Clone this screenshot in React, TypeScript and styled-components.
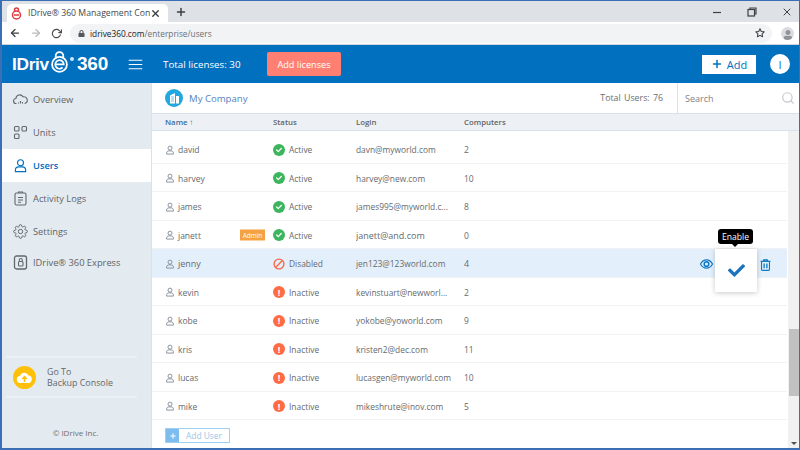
import React from "react";
import styled, { createGlobalStyle } from "styled-components";
import {
  FiArrowLeft,
  FiArrowRight,
  FiRotateCw,
  FiStar,
  FiPlus,
  FiX,
  FiMenu,
  FiSearch,
} from "react-icons/fi";
import { FaLock, FaCheck, FaUser } from "react-icons/fa";

const Global = createGlobalStyle`
  html, body { margin: 0; padding: 0; width: 800px; height: 450px; overflow: hidden; }
  * { box-sizing: border-box; }
  body { font-family: "Open Sans", "Liberation Sans", sans-serif; }
`;

const Frame = styled.div`
  width: 800px;
  height: 450px;
  border: 1px solid #3a6fb5;
  border-left-width: 2px;
  border-bottom-width: 2px;
  display: flex;
  flex-direction: column;
  overflow: hidden;
  background: #fff;
`;

const TabStrip = styled.div`
  height: 21px;
  background: #dee1e6;
  display: flex;
  align-items: flex-end;
  padding-left: 5px;
  flex-shrink: 0;
`;

const Tab = styled.div`
  width: 161px;
  height: 18px;
  background: #fff;
  border-radius: 5px 5px 0 0;
  display: flex;
  align-items: center;
  padding: 0 7px 0 4px;
  font-size: 8.7px;
  color: #45494d;
  white-space: nowrap;
`;

const TabTitle = styled.span`
  flex: 1;
  margin-left: 6px;
  overflow: hidden;
`;

const NewTab = styled.div`
  margin: 0 0 2px 7px;
  color: #3c4043;
  display: flex;
  height: 16px;
  align-items: center;
`;

const WindowButtons = styled.div`
  margin-left: auto;
  height: 21px;
  display: flex;
  align-items: center;
  gap: 24.5px;
  padding-right: 6px;
  color: #3c4043;
`;

const ToolBar = styled.div`
  height: 23px;
  background: #fff;
  display: flex;
  align-items: center;
  padding-left: 7px;
  gap: 9px;
  color: #5f6368;
  border-bottom: 1px solid #d0d4da;
  flex-shrink: 0;
`;

const UrlBar = styled.div`
  width: 702px;
  height: 19px;
  margin-left: -1px;
  border-radius: 10px;
  background: #f1f3f4;
  display: flex;
  align-items: center;
  padding: 0 7px 0 8px;
  font-size: 8.3px;
  color: #6d7074;
`;

const UrlHost = styled.span`
  color: #202124;
  margin-left: 5px;
`;

const UrlEnd = styled.div`
  margin-left: auto;
  display: flex;
  color: #3c4043;
`;

const Avatar = styled.div`
  width: 13px;
  height: 13px;
  border-radius: 50%;
  background: #dadce0;
  color: #8f9296;
  display: flex;
  align-items: flex-end;
  justify-content: center;
  overflow: hidden;
`;

const Header = styled.header`
  height: 38px;
  background: #0070bf;
  display: flex;
  align-items: center;
  color: #fff;
  flex-shrink: 0;
`;

const Logo = styled.div`
  width: 125px;
  padding-left: 10px;
  display: flex;
  align-items: center;
  font-family: "Liberation Sans", sans-serif;
  font-weight: 700;
  font-size: 19px;
  letter-spacing: -0.2px;
`;

const LogoWord = styled.span`
  font-size: 17.3px;
  letter-spacing: -0.3px;
`;

const LogoMark = styled.svg`
  margin: -4px 0 0 1px;
`;

const Reg = styled.span`
  width: 4px;
  height: 4px;
  border-radius: 50%;
  background: #cfe4f4;
  margin: -10px 3px 0 1px;
`;

const Licenses = styled.div`
  font-size: 9.8px;
  margin-left: 19px;
  width: 104px;
`;

const AddLicenses = styled.div`
  width: 74px;
  height: 24px;
  background: #ff7f73;
  border-radius: 2px;
  font-size: 9.2px;
  display: flex;
  align-items: center;
  justify-content: center;
`;

const AddButton = styled.div`
  margin-left: auto;
  width: 54px;
  height: 19px;
  background: #fff;
  color: #0070bf;
  font-size: 11px;
  display: flex;
  align-items: center;
  justify-content: center;
  gap: 4px;
`;

const UserBubble = styled.div`
  width: 20px;
  height: 20px;
  border-radius: 50%;
  background: #fff;
  color: #0070bf;
  font-size: 11px;
  margin: 0 9px 0 14px;
  display: flex;
  align-items: center;
  justify-content: center;
`;

const Body = styled.div`
  flex: 1;
  display: flex;
  min-height: 0;
`;

const Sidebar = styled.nav`
  width: 150px;
  background: #e4ebf0;
  border-right: 1px solid #d8e2ea;
  display: flex;
  flex-direction: column;
  flex-shrink: 0;
`;

const NavList = styled.div`
  display: flex;
  flex-direction: column;
`;

const NavItem = styled.div<{ $active?: boolean; $short?: boolean }>`
  height: ${(p) => (p.$short ? "29px" : "33px")};
  display: flex;
  align-items: center;
  padding-left: 11px;
  gap: 5px;
  font-size: 9.3px;
  font-weight: ${(p) => (p.$active ? 600 : 400)};
  background: ${(p) => (p.$active ? "#fff" : "transparent")};
  color: ${(p) => (p.$active ? "#0070bf" : "#5f6368")};
  white-space: nowrap;
`;

const BackupBox = styled.div`
  margin: auto 14px 0 4px;
  height: 42px;
  border-top: 2px solid #edf1f4;
  border-bottom: 2px solid #edf1f4;
  display: flex;
  align-items: center;
  padding-left: 7px;
  gap: 11px;
  font-size: 8.9px;
  line-height: 11.5px;
  color: #63676b;
`;

const CloudBadge = styled.div`
  width: 23px;
  height: 23px;
  border-radius: 50%;
  background: #ffc107;
  display: flex;
  align-items: center;
  justify-content: center;
`;

const Copyright = styled.div`
  height: 50px;
  display: flex;
  align-items: flex-end;
  justify-content: center;
  padding: 0 2px 10px 0;
  font-size: 8px;
  color: #6c7074;
`;

const Main = styled.main`
  flex: 1;
  min-width: 0;
  display: flex;
  flex-direction: column;
  position: relative;
`;

const CompanyBar = styled.div`
  height: 30px;
  display: flex;
  align-items: center;
  padding-left: 13px;
  flex-shrink: 0;
`;

const CompanyIcon = styled.div`
  width: 18px;
  height: 18px;
  border-radius: 50%;
  background: #22a7e0;
  display: flex;
  align-items: center;
  justify-content: center;
`;

const CompanyName = styled.div`
  margin-left: 6px;
  font-size: 9.6px;
  color: #5584bd;
`;

const TotalUsers = styled.div`
  margin-left: auto;
  font-size: 8.8px;
  color: #6a6e72;
  word-spacing: 1px;
  padding-right: 14px;
`;

const SearchBox = styled.div`
  width: 122px;
  height: 100%;
  border-left: 1px solid #d8e2ec;
  display: flex;
  align-items: center;
  justify-content: space-between;
  padding: 0 4px 0 7px;
  font-size: 9px;
  color: #7f8387;
`;

const Columns = "grid-template-columns: 108px 83px 108px 1fr;";

const TableHead = styled.div`
  height: 18px;
  background: #edf1f5;
  border-top: 1px solid #d8e2ec;
  border-bottom: 1px solid #d8e2ec;
  display: grid;
  ${Columns}
  align-items: center;
  padding-left: 13px;
  font-size: 7.8px;
  font-weight: 600;
  color: #5f6368;
  flex-shrink: 0;
`;

const SortName = styled.div`
  color: #3e6c9f;
`;

const Rows = styled.div`
  flex: 1;
  padding-top: 4px;
  padding-right: 12px;
`;

const Row = styled.div<{ $selected?: boolean }>`
  height: 28.5px;
  display: grid;
  ${Columns}
  align-items: center;
  padding: 2px 0 0 13px;
  border-bottom: 1px solid #f0f2f4;
  background: ${(p) => (p.$selected ? "#e3f0fb" : "#fff")};
  font-size: ${(p) => (p.$selected ? "9px" : "8.5px")};
  color: #666a6e;
  white-space: nowrap;
`;

const NameCell = styled.div`
  display: flex;
  align-items: center;
  gap: 3px;
  position: relative;
`;

const AdminTag = styled.span`
  position: absolute;
  right: 8px;
  top: 50%;
  transform: translateY(-50%);
  width: 25px;
  height: 11px;
  background: #f5a243;
  color: #fff;
  font-size: 6.5px;
  display: flex;
  align-items: center;
  justify-content: center;
`;

const StatusCell = styled.div`
  display: flex;
  align-items: center;
  gap: 4px;
  font-size: 8.4px;
`;

const StatusDot = styled.span<{ $color: string }>`
  width: 12px;
  height: 12px;
  border-radius: 50%;
  background: ${(p) => p.$color};
  color: #fff;
  display: flex;
  align-items: center;
  justify-content: center;
  font-size: 9px;
  font-weight: 700;
`;

const LoginCell = styled.div<{ $large?: boolean }>`
  width: 96px;
  overflow: hidden;
  text-overflow: ellipsis;
  font-size: ${(p) => (p.$large ? "9px" : "8.4px")};
`;

const RowFoot = styled.div`
  height: 28px;
  padding: 8px 0 0 13px;
`;

const AddUser = styled.div`
  width: 65px;
  height: 15px;
  border: 1px solid #9fd0f2;
  display: flex;
  align-items: center;
  font-size: 8.4px;
  color: #9cc6e6;
`;

const AddUserPlus = styled.span`
  width: 13px;
  height: 100%;
  background: #7dbdee;
  color: #fff;
  display: flex;
  align-items: center;
  justify-content: center;
  margin-right: 7px;
`;

const ScrollTrack = styled.div`
  position: absolute;
  top: 48px;
  right: 0;
  bottom: 0;
  width: 11px;
  background: #f1f1f1;
`;

const ScrollThumb = styled.div`
  position: absolute;
  top: 198px;
  left: 1px;
  right: 0;
  height: 67px;
  background: #c1c1c1;
`;

const ScrollArrow = styled.div`
  position: absolute;
  bottom: 3px;
  left: 3px;
  border: 3px solid transparent;
  border-bottom-width: 0;
  border-top-color: #505050;
`;

const RowIcon = styled.div<{ $left: number }>`
  position: absolute;
  top: 176px;
  left: ${(p) => p.$left}px;
  color: #0e78c2;
  display: flex;
`;

const Popup = styled.div`
  position: absolute;
  left: 563px;
  top: 166px;
  width: 42px;
  height: 43px;
  background: #fff;
  box-shadow: 0 1px 5px rgba(0, 0, 0, 0.22);
  display: flex;
  align-items: center;
  justify-content: center;
  color: #1a73c0;
`;

const Tip = styled.div`
  position: absolute;
  left: 566px;
  top: 146px;
  width: 35px;
  height: 15px;
  background: #000;
  border-radius: 3px;
  color: #fff;
  font-size: 8.6px;
  display: flex;
  align-items: center;
  justify-content: center;

  &::after {
    content: "";
    position: absolute;
    left: 14px;
    bottom: -3px;
    border: 3px solid transparent;
    border-bottom-width: 0;
    border-top-color: #000;
  }
`;

const users = [
  { name: "david", status: "Active", login: "davn@myworld.com", computers: 2 },
  { name: "harvey", status: "Active", login: "harvey@new.com", computers: 10 },
  { name: "james", status: "Active", login: "james995@myworld.com", computers: 8 },
  { name: "janett", status: "Active", login: "janett@and.com", computers: 0, admin: true },
  { name: "jenny", status: "Disabled", login: "jen123@123world.com", computers: 4 },
  { name: "kevin", status: "Inactive", login: "kevinstuart@newworld.com", computers: 2 },
  { name: "kobe", status: "Inactive", login: "yokobe@yoworld.com", computers: 9 },
  { name: "kris", status: "Inactive", login: "kristen2@dec.com", computers: 11 },
  { name: "lucas", status: "Inactive", login: "lucasgen@myworld.com", computers: 10 },
  { name: "mike", status: "Inactive", login: "mikeshrute@inov.com", computers: 5 },
];

const UserGlyph = ({ size = 10, color = "#7b8794", sw = 1.4 }: { size?: number; color?: string; sw?: number }) => (
  <svg width={size} height={size} viewBox="0 0 16 16" fill="none" stroke={color} strokeWidth={sw}>
    <circle cx="8" cy="5" r="3.2" />
    <path d="M2.5 14.5v-1.5c0-2.2 1.8-3.6 3.6-3.6h3.8c1.8 0 3.6 1.4 3.6 3.6v1.5z" />
  </svg>
);

const StatusIcon = ({ status }: { status: string }) => {
  if (status === "Active")
    return (
      <StatusDot $color="#3cb55e">
        <FaCheck size={6} />
      </StatusDot>
    );
  if (status === "Inactive") return <StatusDot $color="#ff6b42">!</StatusDot>;
  return (
    <svg width="12" height="12" viewBox="0 0 12 12" fill="none" stroke="#f8694a" strokeWidth="1.4">
      <circle cx="6" cy="6" r="4.9" />
      <path d="M2.6 9.4 9.4 2.6" />
    </svg>
  );
};

const gray = { fill: "none", stroke: "#62676c", strokeWidth: 1.1 };

const OverviewIcon = () => (
  <svg width="15" height="13" viewBox="0 0 15 13" {...gray}>
    <path d="M3.5 10.5h-.3a2.5 2.5 0 0 1-.3-5A3.8 3.8 0 0 1 10 3.8a3.3 3.3 0 0 1 1.6 6.7" />
    <path d="M5.5 10.5v-1M7.5 10.5V8M9.5 10.5V9" />
  </svg>
);

const UnitsIcon = () => (
  <svg width="15" height="15" viewBox="0 0 15 15" {...gray}>
    <rect x="1.5" y="1.5" width="4.5" height="4.5" rx="1" />
    <rect x="9" y="1.5" width="4.5" height="4.5" rx="1" />
    <rect x="1.5" y="9" width="4.5" height="4.5" rx="1" />
  </svg>
);

const LogsIcon = () => (
  <svg width="15" height="15" viewBox="0 0 15 15" {...gray}>
    <rect x="2" y="2" width="11" height="12" rx="1.5" />
    <path d="M5.5 2V1h4v1M5 6.5h5M5 9h5M5 11.3h3" />
  </svg>
);

const GearIcon = () => (
  <svg width="15" height="15" viewBox="0 0 24 24" fill="none" stroke="#62676c" strokeWidth="1.6">
    <circle cx="12" cy="12" r="3.5" />
    <path d="M19.4 15a1.65 1.65 0 0 0 .33 1.82l.06.06a2 2 0 1 1-2.83 2.83l-.06-.06a1.65 1.65 0 0 0-2.82 1.15V21a2 2 0 1 1-4 0v-.09a1.65 1.65 0 0 0-2.8-1.17l-.06.06a2 2 0 1 1-2.83-2.83l.06-.06a1.65 1.65 0 0 0-1.15-2.82H3a2 2 0 1 1 0-4h.09a1.65 1.65 0 0 0 1.17-2.8l-.06-.06a2 2 0 1 1 2.83-2.83l.06.06a1.65 1.65 0 0 0 2.82-1.15V3a2 2 0 1 1 4 0v.09a1.65 1.65 0 0 0 2.8 1.17l.06-.06a2 2 0 1 1 2.83 2.83l-.06.06a1.65 1.65 0 0 0 1.15 2.82H21a2 2 0 1 1 0 4h-.09a1.65 1.65 0 0 0-1.51 1.09z" />
  </svg>
);

const ExpressIcon = () => (
  <svg width="15" height="15" viewBox="0 0 15 15" {...gray}>
    <rect x="1.5" y="1" width="12" height="13" rx="2" strokeWidth="1.3" />
    <rect x="5.5" y="6.5" width="4.5" height="4.5" rx="1" />
    <path d="M6.3 6.5V5a1.5 1.5 0 0 1 3 0v1.5" />
  </svg>
);

const LogoE = () => (
  <LogoMark width="19" height="24" viewBox="0 0 20 24" fill="none" stroke="#fff">
    <path d="M6 8.5V5.5a4 4 0 0 1 8 0v3" strokeWidth="1.8" />
    <circle cx="10" cy="14.5" r="7.8" strokeWidth="1.9" />
    <path d="M5.5 14.5h9a4.5 4.5 0 1 0-1.2 3.2" strokeWidth="1.8" />
  </LogoMark>
);

export default function App() {
  return (
    <>
      <Global />
      <Frame>
        <TabStrip>
          <Tab>
            <svg width="11" height="13" viewBox="0 0 11 13" fill="none" stroke="#e0393e" strokeWidth="1.5">
              <path d="M3.5 4V3a2 2 0 0 1 4 0v1" />
              <circle cx="5.5" cy="8" r="4" />
              <path d="M3 8h5" />
            </svg>
            <TabTitle>IDrive® 360 Management Conso</TabTitle>
            <FiX size={11} color="#3c4043" strokeWidth={3} />
          </Tab>
          <NewTab>
            <FiPlus size={12} strokeWidth={3} />
          </NewTab>
          <WindowButtons>
            <svg width="10" height="10" viewBox="0 0 10 10" stroke="currentColor" fill="none">
              <path d="M1 5.5h8" strokeWidth="1.2" />
            </svg>
            <svg width="10" height="10" viewBox="0 0 10 10" stroke="currentColor" fill="none" strokeWidth="1.2">
              <rect x="1" y="2.5" width="6.5" height="6.5" />
              <path d="M3 2.5V1h6v6H7.5" />
            </svg>
            <FiX size={12} />
          </WindowButtons>
        </TabStrip>
        <ToolBar>
          <FiArrowLeft size={12} color="#3c4043" strokeWidth={2.5} />
          <FiArrowRight size={12} color="#b8bbbf" strokeWidth={2.5} />
          <FiRotateCw size={11} color="#4a4d50" strokeWidth={2.5} />
          <UrlBar>
            <FaLock size={7} color="#55585c" />
            <UrlHost>idrive360.com</UrlHost>/enterprise/users
            <UrlEnd>
              <FiStar size={10} strokeWidth={2.5} />
            </UrlEnd>
          </UrlBar>
          <Avatar>
            <FaUser size={10} />
          </Avatar>
        </ToolBar>
        <Header>
          <Logo>
            <LogoWord>IDriv</LogoWord>
            <LogoE />
            <Reg />
            360
          </Logo>
          <FiMenu size={17} strokeWidth={1.4} />
          <Licenses>Total licenses: 30</Licenses>
          <AddLicenses>Add licenses</AddLicenses>
          <AddButton>
            <FiPlus size={12} strokeWidth={3} />
            Add
          </AddButton>
          <UserBubble>I</UserBubble>
        </Header>
        <Body>
          <Sidebar>
            <NavList>
              <NavItem>
                <OverviewIcon />
                Overview
              </NavItem>
              <NavItem>
                <UnitsIcon />
                Units
              </NavItem>
              <NavItem $active>
                <UserGlyph size={15} color="#0070bf" sw={1.2} />
                Users
              </NavItem>
              <NavItem>
                <LogsIcon />
                Activity Logs
              </NavItem>
              <NavItem>
                <GearIcon />
                Settings
              </NavItem>
              <NavItem $short>
                <ExpressIcon />
                IDrive® 360 Express
              </NavItem>
            </NavList>
            <BackupBox>
              <CloudBadge>
                <svg width="17" height="13" viewBox="0 0 17 13" fill="none">
                  <path d="M4.5 12a3.5 3.5 0 0 1-.4-7A4.5 4.5 0 0 1 12.5 4.5 3.8 3.8 0 0 1 12.8 12z" fill="#fff" />
                  <path d="M8.5 11V6M6.3 8 8.5 5.7 10.7 8" stroke="#ffc107" strokeWidth="1.5" />
                </svg>
              </CloudBadge>
              <div>
                Go To
                <br />
                Backup Console
              </div>
            </BackupBox>
            <Copyright>© IDrive Inc.</Copyright>
          </Sidebar>
          <Main>
            <CompanyBar>
              <CompanyIcon>
                <svg width="11" height="12" viewBox="0 0 11 12" fill="#fff">
                  <path d="M1 3.5 6 1v10.500H1zM7 4h3v7.500H7z" />
                  <path d="M2 5h3M2 7h3M2 9h3" stroke="#22a7e0" strokeWidth="0.7" />
                </svg>
              </CompanyIcon>
              <CompanyName>My Company</CompanyName>
              <TotalUsers>Total Users: 76</TotalUsers>
              <SearchBox>
                Search
                <FiSearch size={14} color="#c4c8cc" />
              </SearchBox>
            </CompanyBar>
            <TableHead>
              <SortName>Name ↑</SortName>
              <div>Status</div>
              <div>Login</div>
              <div>Computers</div>
            </TableHead>
            <Rows>
              {users.map((u) => (
                <Row key={u.name} $selected={u.name === "jenny"}>
                  <NameCell>
                    <UserGlyph />
                    {u.name}
                    {u.admin && <AdminTag>Admin</AdminTag>}
                  </NameCell>
                  <StatusCell>
                    <StatusIcon status={u.status} />
                    {u.status}
                  </StatusCell>
                  <LoginCell $large={u.name === "janett"}>{u.login}</LoginCell>
                  <div>{u.computers}</div>
                </Row>
              ))}
              <RowFoot>
                <AddUser>
                  <AddUserPlus>
                    <FiPlus size={8} strokeWidth={3} />
                  </AddUserPlus>
                  Add User
                </AddUser>
              </RowFoot>
            </Rows>
            <ScrollTrack>
              <ScrollThumb />
              <ScrollArrow />
            </ScrollTrack>
            <RowIcon $left={547}>
              <svg width="15" height="10" viewBox="0 0 16 12" fill="none" stroke="currentColor" strokeWidth="1.4">
                <path d="M.8 6C2.5 2.8 5 1 8 1s5.500 1.800 7.200 5C13.500 9.200 11 11 8 11S2.500 9.200.8 6z" />
                <circle cx="8" cy="6" r="2.8" strokeWidth="1.8" />
              </svg>
            </RowIcon>
            <RowIcon $left={608}>
              <svg width="11" height="12" viewBox="0 0 11 13" fill="none" stroke="currentColor" strokeWidth="1.2">
                <path d="M0 2.5h11M3.5 2.5V1h4v1.5" />
                <rect x="1.2" y="2.5" width="8.6" height="9.8" rx="1" />
                <path d="M4 5v5M7 5v5" strokeWidth="1.4" />
              </svg>
            </RowIcon>
            <Popup>
              <FaCheck size={17} />
            </Popup>
            <Tip>Enable</Tip>
          </Main>
        </Body>
      </Frame>
    </>
  );
}
